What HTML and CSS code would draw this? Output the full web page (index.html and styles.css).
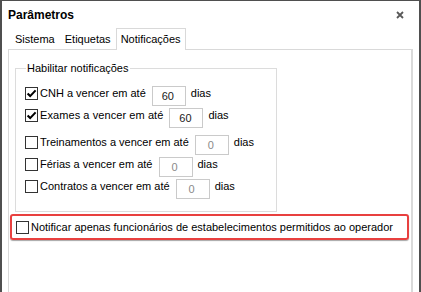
FILE: index.html
```html
<!DOCTYPE html>
<html>
<head>
    <meta charset="UTF-8">
    <title>Parâmetros</title>
    <link rel="stylesheet" href="styles.css">
</head>
<body>
    <div class="window">
        <div class="titlebar">
            <span class="title">Parâmetros</span>
            <svg class="close" width="8" height="8" viewBox="0 0 8 8">
                <path d="M1 1L7 7M7 1L1 7" stroke="#595959" stroke-width="1.8" fill="none"/>
            </svg>
        </div>
        <ul class="tabs">
            <li class="tab">Sistema</li>
            <li class="tab">Etiquetas</li>
            <li class="tab active">Notificações</li>
        </ul>
        <div class="panel">
            <fieldset class="group">
                <legend>Habilitar notificações</legend>
                <div class="row">
                    <label class="check"><span class="box"><svg width="11" height="11" viewBox="0 0 11 11"><path d="M1.6 5.4L4.2 8.1L9.6 2.4" stroke="#000" stroke-width="2.1" fill="none"/></svg></span>CNH a vencer em até</label>
                    <input class="num" type="text" value="60">
                    <span class="unit">dias</span>
                </div>
                <div class="row">
                    <label class="check exames"><span class="box"><svg width="11" height="11" viewBox="0 0 11 11"><path d="M1.6 5.4L4.2 8.1L9.6 2.4" stroke="#000" stroke-width="2.1" fill="none"/></svg></span>Exames a vencer em até</label>
                    <input class="num" type="text" value="60">
                    <span class="unit">dias</span>
                </div>
                <div class="row spaced">
                    <label class="check"><span class="box"></span>Treinamentos a vencer em até</label>
                    <input class="num" type="text" value="0" disabled>
                    <span class="unit">dias</span>
                </div>
                <div class="row">
                    <label class="check"><span class="box"></span>Férias a vencer em até</label>
                    <input class="num" type="text" value="0" disabled>
                    <span class="unit">dias</span>
                </div>
                <div class="row">
                    <label class="check"><span class="box"></span>Contratos a vencer em até</label>
                    <input class="num" type="text" value="0" disabled>
                    <span class="unit">dias</span>
                </div>
            </fieldset>
            <div class="notify">
                <label class="check"><span class="box"></span>Notificar apenas funcionários de estabelecimentos permitidos ao operador</label>
            </div>
        </div>
    </div>
</body>
</html>
```

FILE: styles.css
```css
*{
    margin: 0;
    padding: 0;
    box-sizing: border-box;
}
ul,li{
    list-style: none;
}
html,body{
    width: 100%;
    height: 100%;
}
body{
    font-family: "Liberation Sans", Arial, sans-serif;
    font-size: 11px;
    color: #000;
    background: #fff;
}
.window{
    height: 292px;
    display: flex;
    flex-direction: column;
    border-top: 1px solid #4f4f4f;
    border-left: 2px solid #4f4f4f;
    border-right: 2px solid #4f4f4f;
    background: #fff;
    overflow: hidden;
}
.titlebar{
    display: flex;
    justify-content: space-between;
    align-items: flex-start;
    padding: 7px 15px 6px 6px;
}
.title{
    font-size: 12px;
    font-weight: bold;
    line-height: 14px;
}
.close{
    display: block;
    margin-top: 3px;
}
.tabs{
    display: flex;
    align-items: flex-end;
    margin: 0 6px;
    padding-left: 2px;
    border-bottom: 1px solid #d9d9d9;
}
.tab{
    border: 1px solid transparent;
    border-bottom: 0;
    padding: 0 4px 1px;
    margin-bottom: -1px;
    line-height: 20px;
}
.tab.active{
    border-color: #d9d9d9;
    background: #fff;
}
.panel{
    flex: 1;
    margin: 0 6px;
    border-left: 1px solid #d9d9d9;
    border-right: 2px solid #d9d9d9;
}
.group{
    width: 262px;
    margin: 12px 0 0 6px;
    padding: 12px 0 12px 9px;
    border: 1px solid #dcdcdc;
}
.group legend{
    margin-left: 1px;
    padding: 0 1px;
    line-height: 12px;
}
.row{
    display: flex;
    align-items: flex-start;
    height: 20px;
}
.row + .row{
    margin-top: 2px;
}
.row.spaced{
    margin-top: 7px;
}
.check{
    display: flex;
    align-items: center;
    line-height: 13px;
    white-space: nowrap;
}
.row .check{
    margin-top: 1px;
}
.check.exames{
    letter-spacing: 0.08px;
}
.box{
    display: flex;
    align-items: center;
    justify-content: center;
    width: 13px;
    height: 13px;
    margin-right: 2px;
    border: 1px solid #333;
    background: #fff;
}
.box svg{
    display: block;
}
.num{
    width: 34px;
    height: 20px;
    margin-left: 6px;
    border: 1px solid #cacaca;
    background: #fff;
    font: inherit;
    color: #1a1a1a;
    text-align: center;
    padding: 0 2px 0 0;
    outline: none;
}
.num:disabled{
    color: #8a8a8a;
    background: #fff;
}
.unit{
    margin: 1px 0 0 5px;
    line-height: 13px;
}
.notify{
    margin: 2px 2px 0 1px;
    padding: 5px 4px 4px;
    border: 2px solid #e8403f;
    border-radius: 3px;
    box-shadow: 0 1px 1px rgba(0, 0, 0, .35);
}
```
